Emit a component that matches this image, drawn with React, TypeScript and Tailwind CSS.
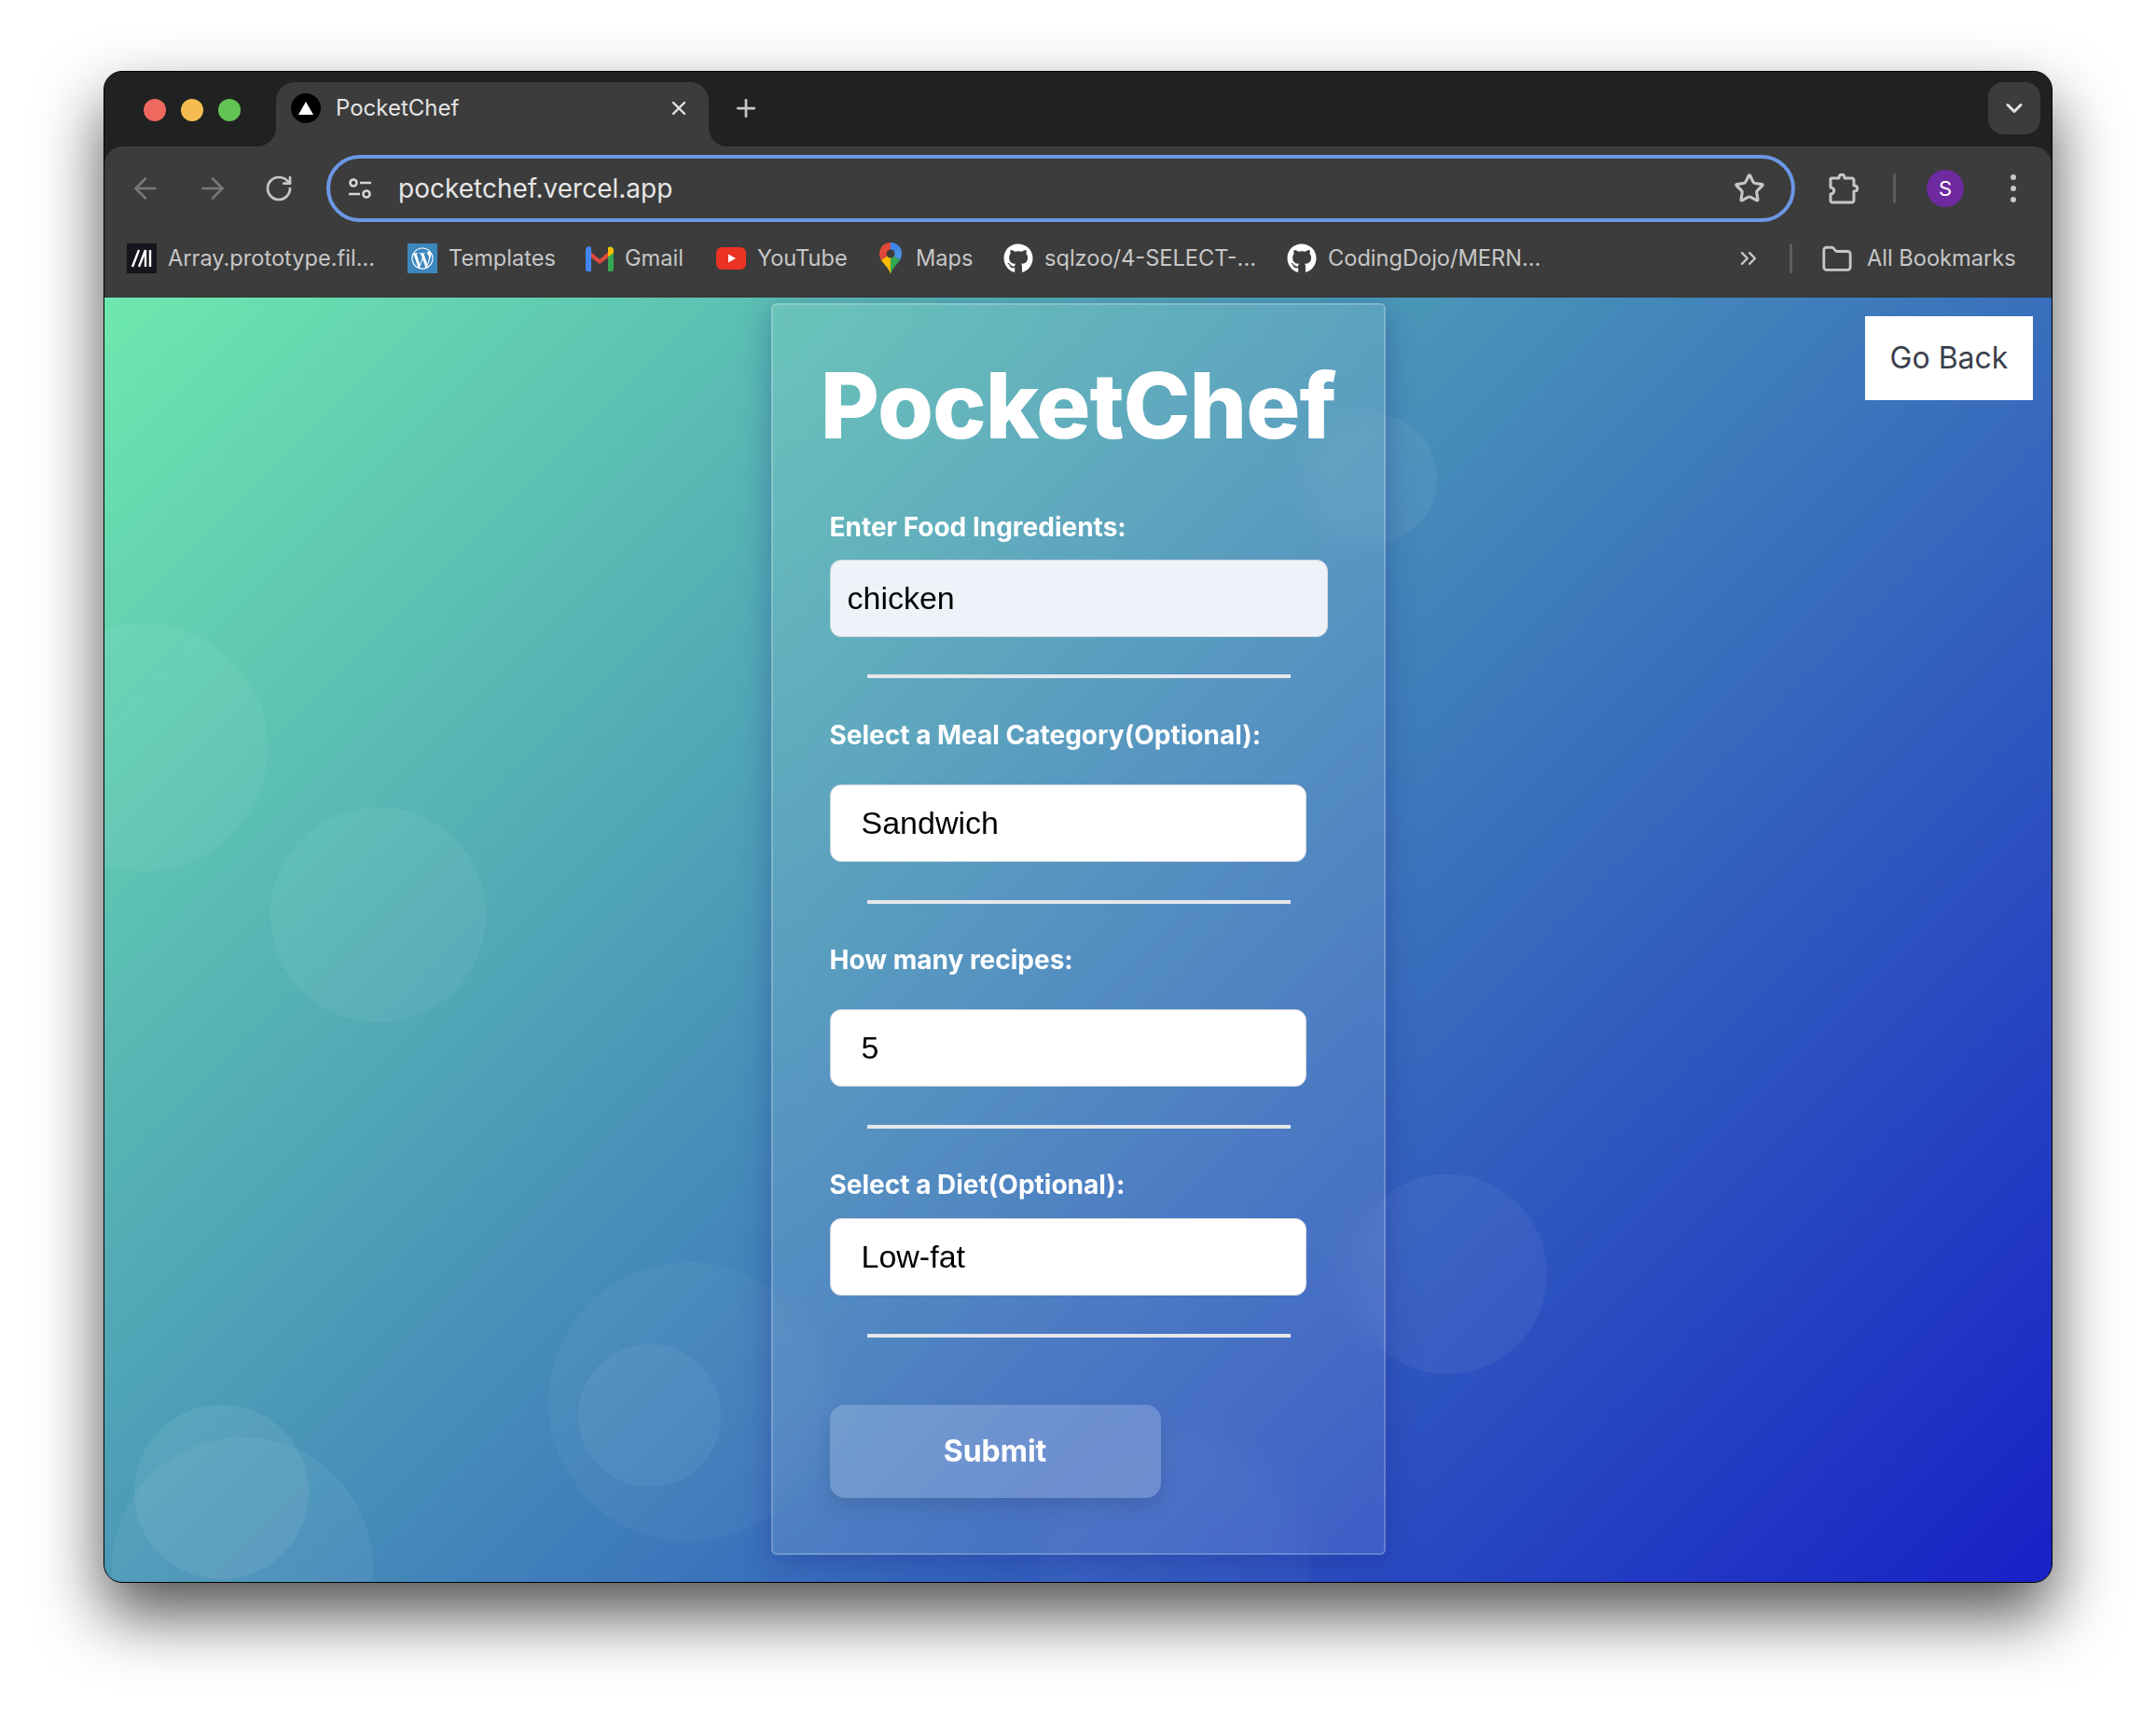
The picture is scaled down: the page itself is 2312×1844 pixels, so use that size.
import { ArrowLeft, ArrowRight, ChevronDown, ChevronsRight, Folder, Plus, RotateCw, Star, X } from "lucide-react";
import { FaGithub, FaWordpressSimple } from "react-icons/fa";

const MdnIcon = () => (
    <div className="w-8 h-8 bg-[#15151b] flex items-center justify-center">
        <svg viewBox="0 0 32 32" className="w-8 h-8" fill="none" stroke="white" strokeWidth="2.4">
            <path d="M6 25 13 7M13 25 20 7M20 7v18M25 7v18" />
        </svg>
    </div>
);

const WordpressIcon = () => (
    <div className="w-8 h-8 bg-[#3c87bd] flex items-center justify-center">
        <FaWordpressSimple className="w-6 h-6 text-white" />
    </div>
);

const GmailIcon = () => (
    <svg viewBox="0 0 30 28" className="w-[30px] h-7">
        <path d="M2 4 15 15 28 4v6L15 20 2 10z" fill="#e04a3d" />
        <path d="M0 5c0-3 3-5 5.500-3L6 2.500V28H2c-1 0-2-1-2-2z" fill="#4285f4" />
        <path d="M30 5c0-3-3-5-5.500-3L24 2.500V28h4c1 0 2-1 2-2z" fill="#34a853" />
        <path d="M24 2.500c2-1.500 6-.5 6 3V8l-6 4.500z" fill="#fbbc04" />
    </svg>
);

const YoutubeIcon = () => (
    <svg viewBox="0 0 32 24" className="w-8 h-6">
        <rect width="32" height="24" rx="6" fill="#ea3323" />
        <path d="M13 7.500 21 12l-8 4.500z" fill="white" />
    </svg>
);

const MapsIcon = () => (
    <svg viewBox="0 0 24 34" className="w-6 h-[34px]">
        <path d="M12 0C5 0 0 5.500 0 12c0 3 .8 5 2 7L12 12z" fill="#e0493b" />
        <path d="M12 0c4 0 7.500 1.800 9.600 4.600L12 12z" fill="#4285f4" />
        <path d="M21.600 4.600C23 6.500 24 9 24 12c0 3-1 5-2 7L12 12z" fill="#4a90e2" />
        <path d="M2 19c2 3.500 8 8 10 15V12z" fill="#fbbc04" />
        <path d="M22 19c-2 3.500-8 8-10 15V12z" fill="#34a853" />
        <circle cx="12" cy="12" r="4.500" fill="#3c3c3c" />
    </svg>
);

const TuneIcon = () => (
    <svg viewBox="0 0 26 26" className="w-[26px] h-[26px]" fill="none" stroke="#d6d6d6" strokeWidth="2.600">
        <circle cx="6" cy="7" r="3.500" />
        <path d="M13 7h12M1 19h12" />
        <circle cx="20" cy="19" r="3.500" />
    </svg>
);

const PuzzleIcon = () => (
    <svg viewBox="0 0 34 34" className="w-[34px] h-[34px]" fill="none" stroke="#c7c7c7" strokeWidth="3" strokeLinejoin="round">
        <path d="M4 6h8c0-5 6-5 6 0h8c1 0 2 1 2 2v6c5 0 5 6 0 6v10c0 1-1 2-2 2H5c-1 0-2-1-2-2v-7c5 0 5-7 0-7V7c0-.6.4-1 1-1z" />
    </svg>
);

const bookmarks = [
    { icon: <MdnIcon />, label: "Array.prototype.fil...", width: "w-[223px]" },
    { icon: <WordpressIcon />, label: "Templates", width: "w-[113px]" },
    { icon: <GmailIcon />, label: "Gmail", width: "w-[64px]" },
    { icon: <YoutubeIcon />, label: "YouTube", width: "w-[97px]" },
    { icon: <MapsIcon />, label: "Maps", width: "w-[60px] ml-[3px]" },
    { icon: <FaGithub className="w-8 h-8 text-white" />, label: "sqlzoo/4-SELECT-...", width: "w-[226px]" },
    { icon: <FaGithub className="w-8 h-8 text-white" />, label: "CodingDojo/MERN...", width: "w-[225px]" },
];

const TabBar = () => (
    <div className="h-[80px] bg-[#202221] flex shrink-0">
        <div className="flex gap-4 ml-[42px] mt-[29px]">
            <div className="w-6 h-6 rounded-full bg-[#ee6a5f]"></div>
            <div className="w-6 h-6 rounded-full bg-[#f5bd4f]"></div>
            <div className="w-6 h-6 rounded-full bg-[#61c454]"></div>
        </div>
        <div className="relative ml-[38px] mt-[11px] w-[464px] h-[69px] bg-[#3c3c3c] rounded-t-[20px] flex items-start pt-3 pl-4">
            <svg viewBox="0 0 20 20" className="absolute left-[-20px] bottom-0 w-5 h-5">
                <path d="M0 20C11 20 20 11 20 0v20z" fill="#3c3c3c" />
            </svg>
            <svg viewBox="0 0 20 20" className="absolute right-[-20px] bottom-0 w-5 h-5">
                <path d="M20 20C9 20 0 11 0 0v20z" fill="#3c3c3c" />
            </svg>
            <div className="w-8 h-8 rounded-full bg-black flex items-center justify-center">
                <div className="w-0 h-0 border-l-[8px] border-r-[8px] border-b-[14px] border-l-transparent border-r-transparent border-b-white"></div>
            </div>
            <span className="ml-4 text-[24px] leading-8 text-[#e3e3e3] font-['Inter',sans-serif]">PocketChef</span>
            <X className="absolute right-[20px] top-[16px] w-6 h-6 text-[#e3e3e3]" strokeWidth={2.4} />
        </div>
        <Plus className="ml-[25px] mt-[24px] w-[30px] h-[30px] text-[#c7c7c7]" strokeWidth={2.2} />
        <div className="ml-auto mr-3 mt-[11px] w-[56px] h-[56px] rounded-2xl bg-[#3c3c3c] flex items-center justify-center">
            <ChevronDown className="w-7 h-7 text-[#e3e3e3]" strokeWidth={2.6} />
        </div>
    </div>
);

const Toolbar = () => (
    <div className="h-[90px] flex items-center shrink-0">
        <ArrowLeft className="ml-[26px] w-9 h-9 text-[#777777]" strokeWidth={1.8} />
        <ArrowRight className="ml-[36px] w-9 h-9 text-[#777777]" strokeWidth={1.8} />
        <RotateCw className="ml-[37px] w-8 h-8 text-[#c7c7c7]" strokeWidth={2} />
        <div className="ml-[35px] w-[1575px] h-[72px] rounded-full border-4 border-[#6c97e6] flex items-center pl-[19px] pr-[28px]">
            <TuneIcon />
            <span className="ml-[28px] text-[28px] text-[#e6e6e6] font-['Inter',sans-serif]">pocketchef.vercel.app</span>
            <Star className="ml-auto w-[34px] h-[34px] text-[#c7c7c7]" strokeWidth={2.2} />
        </div>
        <div className="ml-[35px]">
            <PuzzleIcon />
        </div>
        <div className="ml-[36px] w-[3px] h-8 bg-[#5d5d5d] rounded"></div>
        <div className="ml-[33px] w-10 h-10 rounded-full bg-[#6e2a9e] flex items-center justify-center text-[22px] text-white font-['Inter',sans-serif]">S</div>
        <div className="ml-[50px] flex flex-col gap-[6px]">
            <div className="w-[6px] h-[6px] rounded-full bg-[#c7c7c7]"></div>
            <div className="w-[6px] h-[6px] rounded-full bg-[#c7c7c7]"></div>
            <div className="w-[6px] h-[6px] rounded-full bg-[#c7c7c7]"></div>
        </div>
    </div>
);

const BookmarkBar = () => (
    <div className="h-[72px] flex items-start pt-[14px] border-b border-[#353535] shrink-0 text-[23.6px] leading-8 text-[#c7c7c7] font-['Inter',sans-serif]">
        <div className="ml-6 flex gap-[34px]">
            {bookmarks.map((b) => (
                <div key={b.label} className="flex items-center gap-[12px]">
                    <div className="h-8 flex items-center">{b.icon}</div>
                    <span className={`${b.width} whitespace-nowrap`}>{b.label}</span>
                </div>
            ))}
        </div>
        <ChevronsRight className="ml-[212px] mt-[2px] w-7 h-7 text-[#c7c7c7]" strokeWidth={2} />
        <div className="ml-[30px] w-[3px] h-8 bg-[#5d5d5d] rounded"></div>
        <Folder className="ml-[31px] w-[34px] h-[34px] text-[#c7c7c7]" strokeWidth={2} />
        <span className="ml-[15px] whitespace-nowrap">All Bookmarks</span>
    </div>
);

const Bubbles = () => (
    <>
        <div className="absolute left-[-91px] top-[349px] w-[266px] h-[266px] rounded-full bg-white/[0.05]"></div>
        <div className="absolute left-[178px] top-[546px] w-[231px] h-[231px] rounded-full bg-white/[0.05]"></div>
        <div className="absolute left-[476px] top-[1034px] w-[300px] h-[300px] rounded-full bg-white/[0.04]"></div>
        <div className="absolute left-[508px] top-[1122px] w-[153px] h-[153px] rounded-full bg-white/[0.05]"></div>
        <div className="absolute left-[32px] top-[1187px] w-[187px] h-[187px] rounded-full bg-white/[0.07]"></div>
        <div className="absolute left-[8px] top-[1222px] w-[280px] h-[280px] rounded-full bg-white/[0.05]"></div>
        <div className="absolute left-[1333px] top-[940px] w-[214px] h-[214px] rounded-full bg-white/[0.05]"></div>
        <div className="absolute left-[1289px] top-[124px] w-[140px] h-[140px] rounded-full bg-white/[0.06]"></div>
        <div className="absolute left-[1004px] top-[1218px] w-[288px] h-[288px] rounded-full bg-white/[0.03]"></div>
    </>
);

const labelClass = "block text-[28px] leading-9 font-bold text-white";
const fieldClass = "block w-[511px] h-[83px] rounded-xl border border-[#d5d8dc] bg-white pl-[33px] text-[34px] text-black font-['Liberation_Sans',Arial,sans-serif] outline-none appearance-none";
const Divider = ({ className }: { className: string }) => (
    <div className={`ml-[40px] w-[454px] h-1 bg-[#e5e7eb] ${className}`}></div>
);

const RecipeForm = () => (
    <div className="relative mt-[6px] w-[659px] h-[1342px] rounded-md border-2 border-white/20 bg-white/10 backdrop-blur-[16px] shadow-[0_8px_32px_rgba(31,38,135,0.37)] pl-[61px] font-['Inter',sans-serif]">
        <h1 className="-ml-[61px] mt-[50px] text-center text-[97px] leading-[116px] font-extrabold tracking-[-1px] text-white">PocketChef</h1>
        <label className={`${labelClass} mt-[54px] mb-[17px]`}>Enter Food Ingredients:</label>
        <input readOnly defaultValue="chicken" className="block w-[534px] h-[83px] rounded-xl border border-[#d5d8dc] bg-[#edf3f8] pl-[18px] text-[34px] text-black font-['Liberation_Sans',Arial,sans-serif] outline-none" />
        <Divider className="mt-[40px]" />
        <label className={`${labelClass} mt-[43px] mb-[35px]`}>Select a Meal Category(Optional):</label>
        <select defaultValue="Sandwich" className={fieldClass}>
            <option>Sandwich</option>
        </select>
        <Divider className="mt-[41px]" />
        <label className={`${labelClass} mt-[42px] mb-[35px]`}>How many recipes:</label>
        <input readOnly defaultValue="5" className={fieldClass} />
        <Divider className="mt-[41px]" />
        <label className={`${labelClass} mt-[42px] mb-[18px]`}>Select a Diet(Optional):</label>
        <select defaultValue="Low-fat" className={fieldClass}>
            <option>Low-fat</option>
        </select>
        <Divider className="mt-[41px]" />
        <button className="block mt-[72px] w-[355px] h-[100px] rounded-2xl bg-white/20 text-[32px] font-bold text-white shadow-[0_10px_20px_rgba(0,0,0,0.12)]">Submit</button>
    </div>
);

export default function App() {
    return (
        <div className="w-[2312px] h-[1844px] bg-white pt-[76px] pl-[111px] overflow-hidden">
            <div className="w-[2090px] h-[1621px] rounded-[20px] border border-black bg-[#3c3c3c] shadow-[0_34px_70px_rgba(0,0,0,0.68)] overflow-hidden flex flex-col">
                <TabBar />
                <div className="bg-[#202221] shrink-0">
                    <div className="bg-[#3c3c3c] rounded-t-[20px]">
                        <Toolbar />
                        <BookmarkBar />
                    </div>
                </div>
                <div className="relative flex-1 flex justify-center overflow-hidden bg-[linear-gradient(135deg,#6de8ae,#1720c6)]">
                    <Bubbles />
                    <RecipeForm />
                    <button className="absolute right-[20px] top-[20px] w-[180px] h-[90px] bg-white text-[32px] text-[#3a3f4b] font-['Inter',sans-serif]">Go Back</button>
                </div>
            </div>
        </div>
    );
}
